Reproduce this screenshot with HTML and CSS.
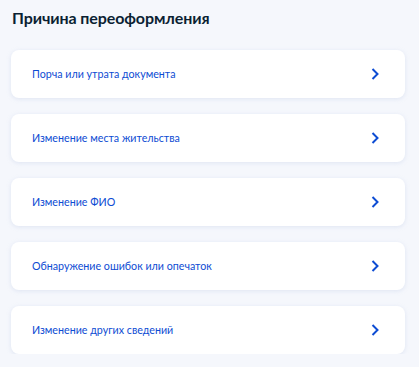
FILE: index.html
```html
<!DOCTYPE html>
<html lang="ru">
<head>
	<meta charset="UTF-8">
	<title>Причина переоформления</title>
	<link rel="stylesheet" href="styles.css">
</head>
<body>
	<div class="page">
		<h2 class="title">Причина переоформления</h2>
		<ul class="reasons">
			<li class="reason">
				<span class="reason-text">Порча или утрата документа</span>
				<svg class="arrow" width="8" height="12" viewBox="0 0 8 12"><path d="M1.5 1 L6.5 6 L1.5 11" fill="none" stroke="#0d4cd3" stroke-width="2"/></svg>
			</li>
			<li class="reason">
				<span class="reason-text">Изменение места жительства</span>
				<svg class="arrow" width="8" height="12" viewBox="0 0 8 12"><path d="M1.5 1 L6.5 6 L1.5 11" fill="none" stroke="#0d4cd3" stroke-width="2"/></svg>
			</li>
			<li class="reason">
				<span class="reason-text">Изменение ФИО</span>
				<svg class="arrow" width="8" height="12" viewBox="0 0 8 12"><path d="M1.5 1 L6.5 6 L1.5 11" fill="none" stroke="#0d4cd3" stroke-width="2"/></svg>
			</li>
			<li class="reason">
				<span class="reason-text">Обнаружение ошибок или опечаток</span>
				<svg class="arrow" width="8" height="12" viewBox="0 0 8 12"><path d="M1.5 1 L6.5 6 L1.5 11" fill="none" stroke="#0d4cd3" stroke-width="2"/></svg>
			</li>
			<li class="reason">
				<span class="reason-text">Изменение других сведений</span>
				<svg class="arrow" width="8" height="12" viewBox="0 0 8 12"><path d="M1.5 1 L6.5 6 L1.5 11" fill="none" stroke="#0d4cd3" stroke-width="2"/></svg>
			</li>
		</ul>
	</div>
</body>
</html>
```

FILE: styles.css
```css
* {
	margin: 0;
	padding: 0;
	box-sizing: border-box;
}
body {
	background: #f5f7fc;
	font-family: Lato, "Noto Sans", sans-serif;
}
.page {
	padding: 8px 14px 0 11px;
}
.title {
	font-size: 16px;
	font-weight: 700;
	line-height: 20px;
	color: #0b1f33;
	padding-left: 1px;
	letter-spacing: -0.1px;
}
.reasons {
	list-style: none;
	margin-top: 22px;
	display: flex;
	flex-direction: column;
	gap: 16px;
}
.reason {
	height: 48px;
	background: #fff;
	border-radius: 8px;
	box-shadow: 0 1px 4px rgba(180, 195, 225, 0.35);
	display: flex;
	align-items: center;
	justify-content: space-between;
	padding: 0 26px 0 21px;
}
.reason-text {
	font-size: 10.7px;
	color: #0d4cd3;
	margin-bottom: 2px;
}
.arrow {
	display: block;
}
```
